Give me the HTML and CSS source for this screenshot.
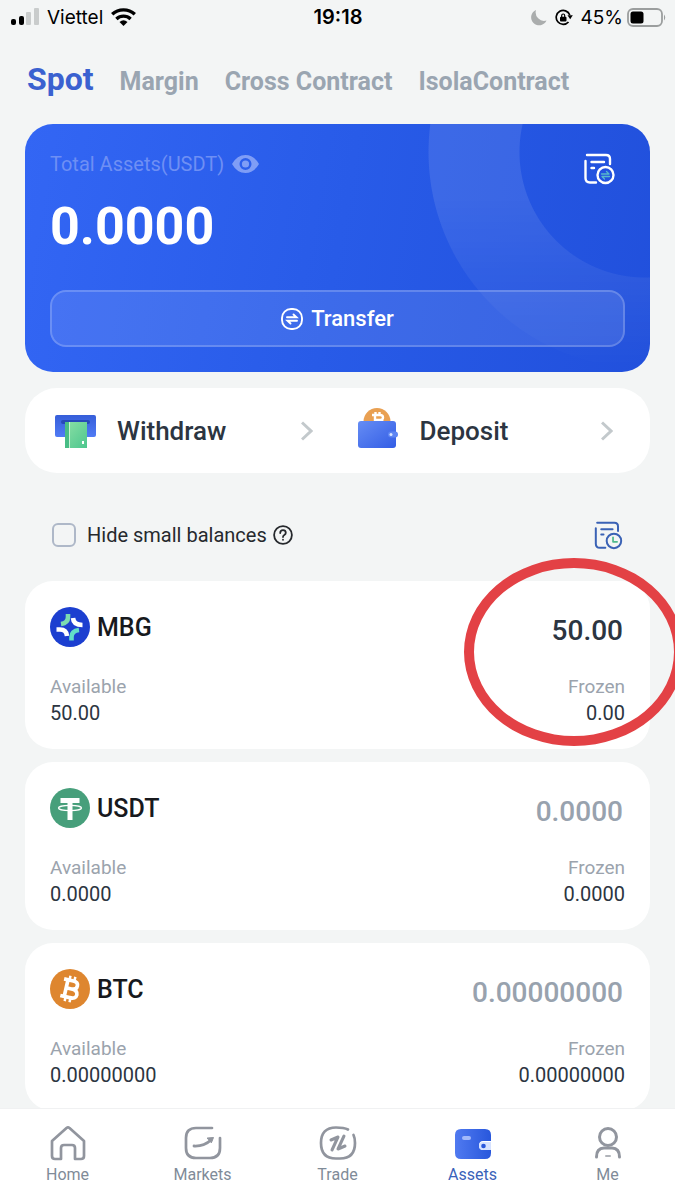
FILE: index.html
```html
<!DOCTYPE html>
<html lang="en">
<head>
<meta charset="utf-8">
<meta name="viewport" content="width=device-width, initial-scale=1">
<title>Assets</title>
<link rel="stylesheet" href="styles.css">
</head>
<body>
<div class="app">
  <header class="status">
    <div class="status-side">
      <svg width="28" height="18" viewBox="0 0 28 18" aria-hidden="true"><rect x="0" y="11" width="5" height="6" rx="2"/><rect x="8" y="8" width="5" height="9" rx="2"/><g fill="#c9cccc"><rect x="15" y="4" width="5" height="13" rx="1"/><rect x="23" y="0" width="5" height="17" rx="1"/></g></svg>
      <span class="carrier">Viettel</span>
      <svg width="25" height="18" viewBox="0 0 25 18" aria-hidden="true"><g fill="none" stroke="#000" stroke-width="3.400"><path d="M1.200 6.300C7.500.4 17.500.4 23.800 6.300"/><path d="M5.400 10.900C9.400 7.200 15.600 7.200 19.600 10.900"/></g><path d="M8.500 14Q12.500 10.600 16.500 14L12.500 18Z"/></svg>
    </div>
    <time class="clock">19:18</time>
    <div class="status-side status-right">
      <svg width="16" height="17" viewBox="0 0 16 17" aria-hidden="true"><path d="M5 1A8 8 0 1 0 15.500 11.500A8.500 8.500 0 0 1 5 1Z" fill="#aaadad"/></svg>
      <svg width="18" height="17" viewBox="0 0 18 17" aria-hidden="true"><path d="M14.800 6A7 7 0 1 0 13.500 13" fill="none" stroke="#000" stroke-width="1.700"/><path d="M12.500 6.200H17.800L15.200 10.200Z"/><rect x="5" y="7.700" width="6.500" height="4.800" rx="1"/><path d="M6.700 8V6.500a1.500 1.500 0 0 1 3 0V8" fill="none" stroke="#000" stroke-width="1.200"/></svg>
      <span class="percent">45%</span>
      <svg width="40" height="19" viewBox="0 0 40 19" aria-hidden="true"><rect x="1" y="1" width="34" height="17" rx="5" fill="none" stroke="#9b9e9e" stroke-width="1.800"/><rect x="3.500" y="3.500" width="13" height="12" rx="2.500"/><path d="M37 6.500q2.500 3 0 6Z" fill="#9b9e9e"/></svg>
    </div>
  </header>

  <nav class="tabs" aria-label="Accounts">
    <button class="tab tab-active" type="button">Spot</button>
    <button class="tab" type="button">Margin</button>
    <button class="tab" type="button">Cross Contract</button>
    <button class="tab" type="button">IsolaContract</button>
  </nav>

  <main class="content">
    <section class="total">
      <div class="total-head">
        <div>
          <div class="total-label">
            <span>Total Assets(USDT)</span>
            <button class="icon-button" type="button" aria-label="Toggle balance"><svg width="27" height="20" viewBox="0 0 27 20"><path fill="#7f9df6" fill-rule="evenodd" d="M0 10Q5 1 13.500 1T27 10Q22 19 13.500 19T0 10ZM13.500 4a6 6 0 1 0 0 12a6 6 0 0 0 0-12Z"/><circle cx="13.500" cy="10" r="3.600" fill="#7f9df6"/></svg></button>
          </div>
          <div class="total-value">0.0000</div>
        </div>
        <button class="icon-button" type="button" aria-label="Transfer history"><svg width="31" height="32" viewBox="0 0 31 32" fill="none" stroke="#fff" stroke-width="2.400" stroke-linecap="round" stroke-linejoin="round"><path d="M3 2H22Q26 2 26 6V11M1.500 8V25Q1.500 29.500 6 29.500H12M7.500 9H20M7.500 15H10"/><circle cx="21.500" cy="22" r="8"/><path d="M17.500 21H25L22.500 18.500M25.500 23.500H18L20.500 26" stroke="#57b9cb" stroke-width="1.300"/></svg></button>
      </div>
      <button class="transfer" type="button">
        <svg width="22" height="22" viewBox="0 0 22 22" fill="none" stroke="#fff" stroke-width="1.900" stroke-linecap="round"><rect x="1" y="1" width="20" height="20" rx="9"/><path d="M6 9.300H15.500L12.500 6.500M16 12.700H6.500L9.500 15.500"/></svg>
        <span>Transfer</span>
      </button>
    </section>

    <section class="actions">
      <a class="action" href="#withdraw">
        <svg class="action-icon" width="41" height="42" viewBox="0 0 41 42" aria-hidden="true"><defs><linearGradient id="slot" x1="0" y1="0" x2="0" y2="1"><stop offset="0" stop-color="#365ed9"/><stop offset="1" stop-color="#507bf5"/></linearGradient><linearGradient id="note" x1="0" y1="0" x2="1" y2="1"><stop offset="0" stop-color="#8ce0a5"/><stop offset="1" stop-color="#4dc68e"/></linearGradient></defs><rect y="8" width="41" height="22" rx="2" fill="url(#slot)"/><rect x="6" y="13" width="29" height="4" rx="2" fill="#2749b8"/><path d="M10 15H32V41H10Z" fill="url(#note)"/><path d="M10 15h4v26h-4Z" fill="#48bd85"/><path d="M14.500 15v26" stroke="#c9f3d6"/><path d="M28 34v3" stroke="#fff" stroke-width="2"/></svg>
        <span class="action-name">Withdraw</span>
        <svg width="12" height="20" viewBox="0 0 12 20" aria-hidden="true"><path d="M1 1.500L10 10L1 18.500" fill="none" stroke="#c3c9cc" stroke-width="3"/></svg>
      </a>
      <a class="action action-last" href="#deposit">
        <svg class="action-icon" width="41" height="42" viewBox="0 0 41 42" aria-hidden="true"><defs><linearGradient id="purse" x1="0" y1="0" x2="1" y2="1"><stop offset="0" stop-color="#668df4"/><stop offset="1" stop-color="#335de5"/></linearGradient></defs><circle cx="19" cy="14.500" r="13.500" fill="#e9a052"/><g fill="none" stroke="#fff" stroke-width="2.400"><path d="M14 8h8q3 0 3 2.500t-3 2.500h-6M17 8v8M22 13q4 1 3 4"/><path d="M17.500 5v3M21.500 5v3"/></g><rect y="14" width="38" height="27" rx="3" fill="url(#purse)"/><rect x="30" y="24.500" width="10" height="6" rx="3" fill="#5e86f3"/><circle cx="33" cy="27.500" r="1.500" fill="#dce6ff"/></svg>
        <span class="action-name">Deposit</span>
        <svg width="12" height="20" viewBox="0 0 12 20" aria-hidden="true"><path d="M1 1.500L10 10L1 18.500" fill="none" stroke="#c3c9cc" stroke-width="3"/></svg>
      </a>
    </section>

    <div class="filter">
      <div class="filter-left">
        <label class="filter-label"><input class="tick" type="checkbox">Hide small balances</label>
        <button class="icon-button" type="button" aria-label="Help"><svg width="20" height="20" viewBox="0 0 20 20" fill="none" stroke="#26292d" stroke-width="1.800" stroke-linecap="round"><circle cx="10" cy="10" r="8.900"/><path d="M7.200 8Q7.300 5.200 10 5.200T12.800 7.700Q12.800 9 11.300 9.900Q10 10.700 10 12"/><path d="M10 14.700v.1"/></svg></button>
      </div>
      <button class="icon-button" type="button" aria-label="Records"><svg width="29" height="29" viewBox="0 0 31 32" fill="none" stroke="#3a62b5" stroke-width="2.200" stroke-linecap="round" stroke-linejoin="round"><path d="M3 2H22Q26 2 26 6V11M1.500 8V25Q1.500 29.500 6 29.500H12M7.500 9H20M7.500 15H10"/><circle cx="21.500" cy="22" r="8"/><path d="M20.500 18V23H25" stroke="#4fb98d" stroke-width="1.900"/></svg></button>
    </div>

    <section class="coins">
      <article class="coin">
        <div class="coin-head">
          <svg width="40" height="40" viewBox="0 0 40 40" aria-hidden="true"><circle cx="20" cy="20" r="20" fill="#1c3fd0"/><g fill="none" stroke-width="4.600"><path d="M18 7V10Q18 16 11 17" stroke="#7cdcb0"/><path d="M23 11Q23.500 18 32.500 18" stroke="#fff"/><path d="M6.500 22.500H10Q16.500 22.500 17 29" stroke="#fff"/><path d="M21.500 33.500V30Q21.500 24 29 23" stroke="#62dec8"/></g></svg>
          <h2 class="coin-name">MBG</h2>
          <span class="coin-total coin-held">50.00</span>
        </div>
        <dl class="amounts">
          <div><dt>Available</dt><dd>50.00</dd></div>
          <div class="amount-end"><dt>Frozen</dt><dd>0.00</dd></div>
        </dl>
        <div class="highlight"></div>
      </article>
      <article class="coin">
        <div class="coin-head">
          <svg width="40" height="40" viewBox="0 0 40 40" aria-hidden="true"><circle cx="20" cy="20" r="20" fill="#479f7b"/><path d="M10.500 10H29.500V15H22.500V32H17.500V15H10.500Z" fill="#fff"/><ellipse cx="20" cy="20" rx="11.500" ry="2.600" fill="none" stroke="#fff" stroke-width="1.300"/></svg>
          <h2 class="coin-name">USDT</h2>
          <span class="coin-total">0.0000</span>
        </div>
        <dl class="amounts">
          <div><dt>Available</dt><dd>0.0000</dd></div>
          <div class="amount-end"><dt>Frozen</dt><dd>0.0000</dd></div>
        </dl>
      </article>
      <article class="coin">
        <div class="coin-head">
          <svg width="40" height="40" viewBox="0 0 40 40" aria-hidden="true"><circle cx="20" cy="20" r="20" fill="#de862f"/><g transform="rotate(13 20 20)" fill="none" stroke="#fff"><path d="M12 11.500H21.500Q26.500 11.500 26.500 15.500T21.500 19.700H16M21.500 19.700Q28 19.700 28 24.200T21.500 28.500H12M16 11.500V28.500" stroke-width="3.700"/><path d="M17.500 7V12M22.500 7V12M17.500 28V33M22.500 28V33" stroke-width="2.500"/></g></svg>
          <h2 class="coin-name">BTC</h2>
          <span class="coin-total">0.00000000</span>
        </div>
        <dl class="amounts">
          <div><dt>Available</dt><dd>0.00000000</dd></div>
          <div class="amount-end"><dt>Frozen</dt><dd>0.00000000</dd></div>
        </dl>
      </article>
    </section>
  </main>

  <nav class="bottom" aria-label="Main">
    <a class="bottom-item" href="#home"><svg width="38" height="36" viewBox="0 0 38 36" fill="none" stroke="#91959e" stroke-width="2.700" stroke-linecap="round" stroke-linejoin="round"><path d="M3 16L17.500 3Q19 1.800 20.500 3L35 16V31Q35 34 32 34H26V23Q26 20 23 20H15Q12 20 12 23V34H6Q3 34 3 31Z"/></svg>Home</a>
    <a class="bottom-item" href="#markets"><svg width="38" height="36" viewBox="0 0 38 36" fill="none" stroke="#91959e" stroke-width="2.700" stroke-linecap="round" stroke-linejoin="round"><path d="M28 3H12Q2 3 2 13V23Q2 33 12 33H26Q36 33 36 23V13"/><path d="M10 21Q20 21.500 27 15" stroke-width="2.800"/><path d="M23.500 13L29.500 12.500L27.500 17.500Z" fill="#91959e" stroke-width="1"/></svg>Markets</a>
    <a class="bottom-item" href="#trade"><svg width="38" height="36" viewBox="0 0 38 36" fill="none" stroke="#91959e" stroke-width="2.700" stroke-linecap="round" stroke-linejoin="round"><path d="M29 4.500Q25 2.500 17 2.500Q2 2.500 2 18T17 33.500H21Q36 33.500 36 18Q36 13 34.500 10"/><path d="M12 15L19 12L13 25M25 11L19 24L26 21" stroke-width="3"/></svg>Trade</a>
    <a class="bottom-item bottom-active" href="#assets" aria-current="page"><svg width="38" height="36" viewBox="0 0 38 36"><defs><linearGradient id="wallet" x1="0" y1="0" x2="1" y2="0"><stop offset="0" stop-color="#507af0"/><stop offset="1" stop-color="#2857dc"/></linearGradient></defs><path d="M7 4H31Q37 4 37 10V16H29Q25 16 25 20.500T29 25H37V28Q37 34 31 34H7Q1 34 1 28V10Q1 4 7 4Z" fill="url(#wallet)"/><path d="M37 17H29.500Q25 17 25 21T29.500 25H37Z" fill="#d6e2ff"/><circle cx="29.500" cy="21" r="2.300" fill="#2857dc"/><rect x="8" y="11" width="9" height="4" rx="2" fill="#a2b9fa"/></svg>Assets</a>
    <a class="bottom-item" href="#me"><svg width="38" height="36" viewBox="0 0 38 36" fill="none" stroke="#91959e" stroke-width="3" stroke-linecap="round"><circle cx="19" cy="12" r="8.500"/><path d="M7.500 32Q7.500 23 15 23H23Q30.500 23 30.500 32"/><path d="M17 31H21" stroke-width="2" stroke="#b1b4ba"/></svg>Me</a>
  </nav>
</div>
</body>
</html>
```

FILE: styles.css
```css
* { box-sizing: border-box; }
body {
  margin: 0;
  background: #f3f5f5;
  color: #2c3541;
  font-family: Roboto, "Liberation Sans", sans-serif;
}
button {
  border: 0;
  padding: 0;
  background: none;
  font: inherit;
  color: inherit;
}
a { color: inherit; text-decoration: none; }
svg { display: block; flex: none; }

.app {
  display: flex;
  flex-direction: column;
  min-height: 100vh;
  overflow-x: clip;
}

.status {
  display: grid;
  grid-template-columns: 1fr auto 1fr;
  align-items: center;
  height: 34px;
  padding: 0 10px 0 11px;
  color: #000;
  font-family: Inter, "Liberation Sans", sans-serif;
  font-size: 19px;
}
.status-side { display: flex; align-items: center; gap: 8px; }
.status-right { justify-content: flex-end; margin-right: -2px; }
.percent { margin-right: -4px; }
.clock { font-size: 20px; font-weight: 600; }

.tabs {
  display: flex;
  align-items: baseline;
  gap: 26px;
  height: 90px;
  padding: 27px 27px 0;
}
.tab {
  color: #9aa5b1;
  font-size: 25px;
  font-weight: 700;
  line-height: 36px;
  white-space: nowrap;
}
.tab-active { color: #3a61d0; font-size: 32px; }

.content { flex: 1; padding: 0 25px; }
.icon-button { display: block; }

.total {
  position: relative;
  overflow: hidden;
  padding: 25px;
  border-radius: 28px;
  background: linear-gradient(100deg, #3366f4, #285be8 50%, #2150dc);
  color: #fff;
}
.total::before {
  content: "";
  position: absolute;
  inset: 0;
  background: radial-gradient(circle at calc(100% - 5px) 28px, transparent 125px, rgba(255, 255, 255, 0.1) 126px, rgba(255, 255, 255, 0.1) 216px, transparent 217px);
  mask-image: linear-gradient(#000 30%, transparent);
}
.total-head {
  position: relative;
  display: flex;
  justify-content: space-between;
  align-items: flex-start;
  padding-right: 10px;
}
.total-head > .icon-button { padding-top: 4px; }
.total-label {
  display: flex;
  align-items: center;
  gap: 8px;
  color: #6e8ff4;
  font-size: 20px;
  line-height: 30px;
}
.total-value {
  margin-top: 18px;
  font-size: 52px;
  font-weight: 700;
  line-height: 60px;
}
.transfer {
  position: relative;
  display: flex;
  align-items: center;
  justify-content: center;
  gap: 8px;
  width: 100%;
  height: 57px;
  margin-top: 33px;
  border: 2px solid rgba(255, 255, 255, 0.2);
  border-radius: 16px;
  background: rgba(255, 255, 255, 0.1);
  font-size: 22px;
  font-weight: 500;
}

.actions {
  display: grid;
  grid-template-columns: 1fr 1fr;
  margin-top: 16px;
  border-radius: 32px;
  background: #fff;
}
.action {
  display: flex;
  align-items: center;
  height: 85px;
  padding: 0 25px 0 30px;
}
.action-last { padding: 0 37px 0 20px; }
.action-icon { margin-bottom: 6px; }
.action-name {
  flex: 1;
  padding-left: 21px;
  font-size: 26px;
  font-weight: 500;
}

.filter {
  display: flex;
  align-items: center;
  justify-content: space-between;
  height: 108px;
  padding: 16px 27px 0;
}
.filter-left { display: flex; align-items: center; gap: 6px; }
.filter-label {
  display: flex;
  align-items: center;
  gap: 11px;
  color: #26292d;
  font-size: 20px;
}
.tick {
  appearance: none;
  width: 24px;
  height: 24px;
  margin: 0;
  border: 2px solid #aeb8c8;
  border-radius: 6px;
}
.tick:checked { background: #3a61d0; }

.coins { display: flex; flex-direction: column; gap: 13px; }
.coin {
  position: relative;
  padding: 24px 25px 23px;
  border-radius: 28px;
  background: #fff;
}
.coin-head { display: flex; align-items: center; gap: 7px; height: 44px; }
.coin-name {
  flex: 1;
  margin: 0;
  color: #17191d;
  font-size: 25px;
  font-weight: 500;
}
.coin-total {
  padding: 6px 2px 0 0;
  color: #98a2ae;
  font-size: 28px;
  font-weight: 500;
}
.coin-held { color: #2c3541; }
.amounts {
  display: flex;
  justify-content: space-between;
  margin: 25px 0 0;
  font-size: 20px;
  line-height: 26px;
}
.amounts dt { color: #9ba3ad; font-size: 19px; }
.amounts dd { margin: 0; }
.amount-end { text-align: right; }

.highlight {
  position: absolute;
  top: -23px;
  right: -34px;
  width: 220px;
  height: 188px;
  border: 10px solid #e34145;
  border-radius: 50%;
  pointer-events: none;
}

.bottom {
  position: sticky;
  bottom: 0;
  display: grid;
  grid-template-columns: repeat(5, 1fr);
  height: 92px;
  margin-top: -3px;
  border-top: 1px solid #f0f1f2;
  background: #fff;
}
.bottom-item {
  display: flex;
  flex-direction: column;
  align-items: center;
  gap: 2px;
  padding-top: 16px;
  color: #7f8b98;
  font-size: 16px;
  line-height: 24px;
}
.bottom-active { color: #3a62b9; }
```
